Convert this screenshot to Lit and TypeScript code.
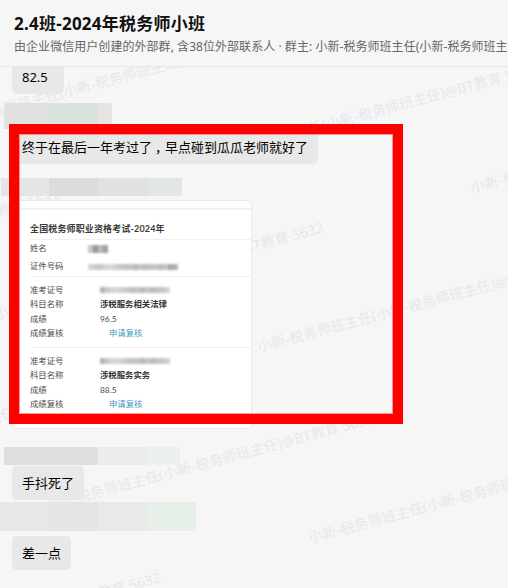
import { LitElement, html, css, svg } from "lit";
import { customElement, property } from "lit/decorators.js";
import { styleMap } from "lit/directives/style-map.js";

type Cell = [width: number, color: string];

/** Strip of flat blocks that hides a member's name. */
@customElement("name-mask")
class NameMask extends LitElement {
  @property({ attribute: false }) cells: Cell[] = [];
  static styles = css`
    :host { display: flex; }
  `;
  render() {
    return this.cells.map(([w, c]) => html`<i style=${styleMap({ width: w + "px", background: c })}></i>`);
  }
}

/** Score sheet shared as a picture message. */
@customElement("score-card")
class ScoreCard extends LitElement {
  static styles = css`
    :host {
      display: block;
      box-sizing: border-box;
      width: 240px;
      height: 229px;
      border: 1px solid #ebebeb;
      border-radius: 5px;
      background: #fff;
      overflow: hidden;
      color: #4a4a4a;
      font: 8.4px/14.4px Lato, "Noto Sans CJK SC", sans-serif;
      white-space: nowrap;
    }
    .bar { height: 2px; margin-top: 7px; background: #f2f2f2; }
    .title {
      margin: 10px 0 0 17px;
      height: 19px;
      line-height: 17px;
      font-size: 8.95px;
      letter-spacing: 0.2px;
      font-weight: 700;
      color: #3b3b3b;
    }
    .group { margin-left: 17px; border-top: 1px solid #f0f0f0; }
    .person { height: 36px; }
    .person .row { height: 18.4px; line-height: 17px; grid-template-columns: 58px 1fr; }
    .exam { padding-top: 6px; height: 64px; }
    .row { display: grid; grid-template-columns: 70px 1fr; height: 14.4px; }
    .bold { font-weight: 700; color: #333; }
    .link { padding-left: 9px; color: #4398c5; }
    .mask { display: flex; align-items: center; filter: blur(0.8px); height: 14.4px; }
    .person .mask { height: 17px; }
    .mask i { display: block; height: 6px; width: 5px; }
    .person .row:first-child i { height: 8px; }
  `;
  mask(shades: string[]) {
    return html`<span class="mask">${shades.map((c) => html`<i style=${styleMap({ background: c })}></i>`)}</span>`;
  }
  row(label: string, value: unknown, cls = "") {
    return html`<div class="row"><span>${label}</span><span class=${cls}>${value}</span></div>`;
  }
  exam(mask: unknown, subject: string, score: string) {
    return html`<div class="group exam">
      ${this.row("准考证号", mask)} ${this.row("科目名称", subject, "bold")}
      ${this.row("成绩", score)} ${this.row("成绩复核", "申请复核", "link")}
    </div>`;
  }
  render() {
    const id = ["#b4b4b4", "#c9c9c9", "#d4d4d4", "#d8d8d8", "#cfcfcf", "#c8c8c8", "#c2c2c2", "#c4c4c4", "#bbb", "#c6c6c6", "#bbb", "#c3c3c3", "#c5c5c5"];
    return html`
      <div class="bar"></div>
      <div class="title">全国税务师职业资格考试-2024年</div>
      <div class="group person">
        ${this.row("姓名", this.mask(["#c4c4c4", "#999", "#b8b8b8", "#a0a0a0"]))}
        ${this.row("证件号码", this.mask(["#d6d6d6", "#cacaca", ...id.slice(1), "#bbb", "#c4c4c4", "#a8a8a8", "#b4b4b4"]))}
      </div>
      ${this.exam(this.mask([...id, "#d4d4d4"]), "涉税服务相关法律", "96.5")}
      ${this.exam(this.mask([...id, "#d0d0d0"]), "涉税服务实务", "88.5")}
    `;
  }
}

const MARKS: [number, number][] = [
  [-54, 129], [209, 161], [472, 193], [-268, 288], [-4, 320], [259, 352],
  [-217, 479], [46, 511], [310, 543], [-167, 670],
];

@customElement("app-root")
class AppRoot extends LitElement {
  static styles = css`
    :host {
      display: flex;
      flex-direction: column;
      position: relative;
      width: 508px;
      height: 588px;
      overflow: hidden;
      background: #f6f6f6;
      font-family: "Noto Sans", "Noto Sans CJK SC", sans-serif;
      white-space: nowrap;
    }
    header {
      box-sizing: border-box;
      height: 67px;
      flex: none;
      padding: 11px 0 0 14px;
      border-bottom: 1px solid #e6e6e8;
      background: #f6f6f6;
      z-index: 1;
    }
    h1 { margin: 0; font-size: 17px; line-height: 26px; letter-spacing: 0.25px; color: #111; }
    p { margin: 0; font-size: 12px; line-height: 19px; letter-spacing: 0.05px; color: #666; }
    .marks { position: absolute; inset: 0; fill: #e7e7ea; font-size: 14px; }
    .feed { display: flex; flex-direction: column; align-items: flex-start; margin-top: -7px; position: relative; }
    .bubble {
      box-sizing: border-box;
      height: 34px;
      padding: 0 10px;
      margin-left: 12px;
      border-radius: 5px;
      background: #e8e8e8;
      color: #000;
      font-size: 13px;
      line-height: 34px;
    }
    .comma { padding-left: 3px; margin-right: -3px; }
    .b1 { width: 52px; }
    .m1 { margin: 9px 0 0 4px; height: 26px; }
    .b2 { margin-top: 1px; width: 306px; }
    .m2 { margin: 14px 0 0 1px; height: 18px; }
    .card { margin: 4px 0 0 12px; }
    .m3 { margin: 18px 0 0 4px; height: 18px; }
    .b3 { margin-top: 1px; width: 72px; }
    .m4 { margin-top: 2px; height: 29px; }
    .b4 { margin-top: 5px; width: 59px; }
    .frame {
      position: absolute;
      box-sizing: border-box;
      left: 9px;
      top: 124px;
      width: 394px;
      height: 300px;
      border: 10px solid #f00;
      box-shadow: inset 0 0 0 1px #f66a;
      z-index: 2;
    }
  `;
  render() {
    return html`
      <svg class="marks" width="508" height="588">
        ${MARKS.map(([x, y]) => svg`<text transform="translate(${x} ${y}) rotate(-15)"><tspan textLength="304">小新-税务师班主任(小新-税务师班主任)@BT教育</tspan><tspan x="308" textLength="32">5632</tspan></text>`)}
      </svg>
      <header>
        <h1>2.4班-2024年税务师小班</h1>
        <p>由企业微信用户创建的外部群, 含38位外部联系人 · 群主: 小新-税务师班主任(小新-税务师班主任)</p>
      </header>
      <div class="feed">
        <div class="bubble b1">82.5</div>
        <name-mask class="m1" .cells=${[[45, "#e1e1e1"], [49, "#d9e2dc"], [14, "#e6e4e5"]]}></name-mask>
        <div class="bubble b2">终于在最后一年考过了<span class="comma">，</span>早点碰到瓜瓜老师就好了</div>
        <name-mask class="m2" .cells=${[[48, "#e6e6e6"], [49, "#dcdcdf"], [49, "#dfe2e1"], [35, "#e0e7e5"]]}></name-mask>
        <score-card class="card"></score-card>
        <name-mask class="m3" .cells=${[[45, "#dfdfdf"], [49, "#dedee0"], [49, "#ebedec"], [33, "#ecf1ed"]]}></name-mask>
        <div class="bubble b3">手抖死了</div>
        <name-mask class="m4" .cells=${[[49, "#e6e7e9"], [49, "#e2e4e6"], [49, "#e9e9eb"], [49, "#e6efe8"]]}></name-mask>
        <div class="bubble b4">差一点</div>
      </div>
      <div class="frame"></div>
    `;
  }
}
